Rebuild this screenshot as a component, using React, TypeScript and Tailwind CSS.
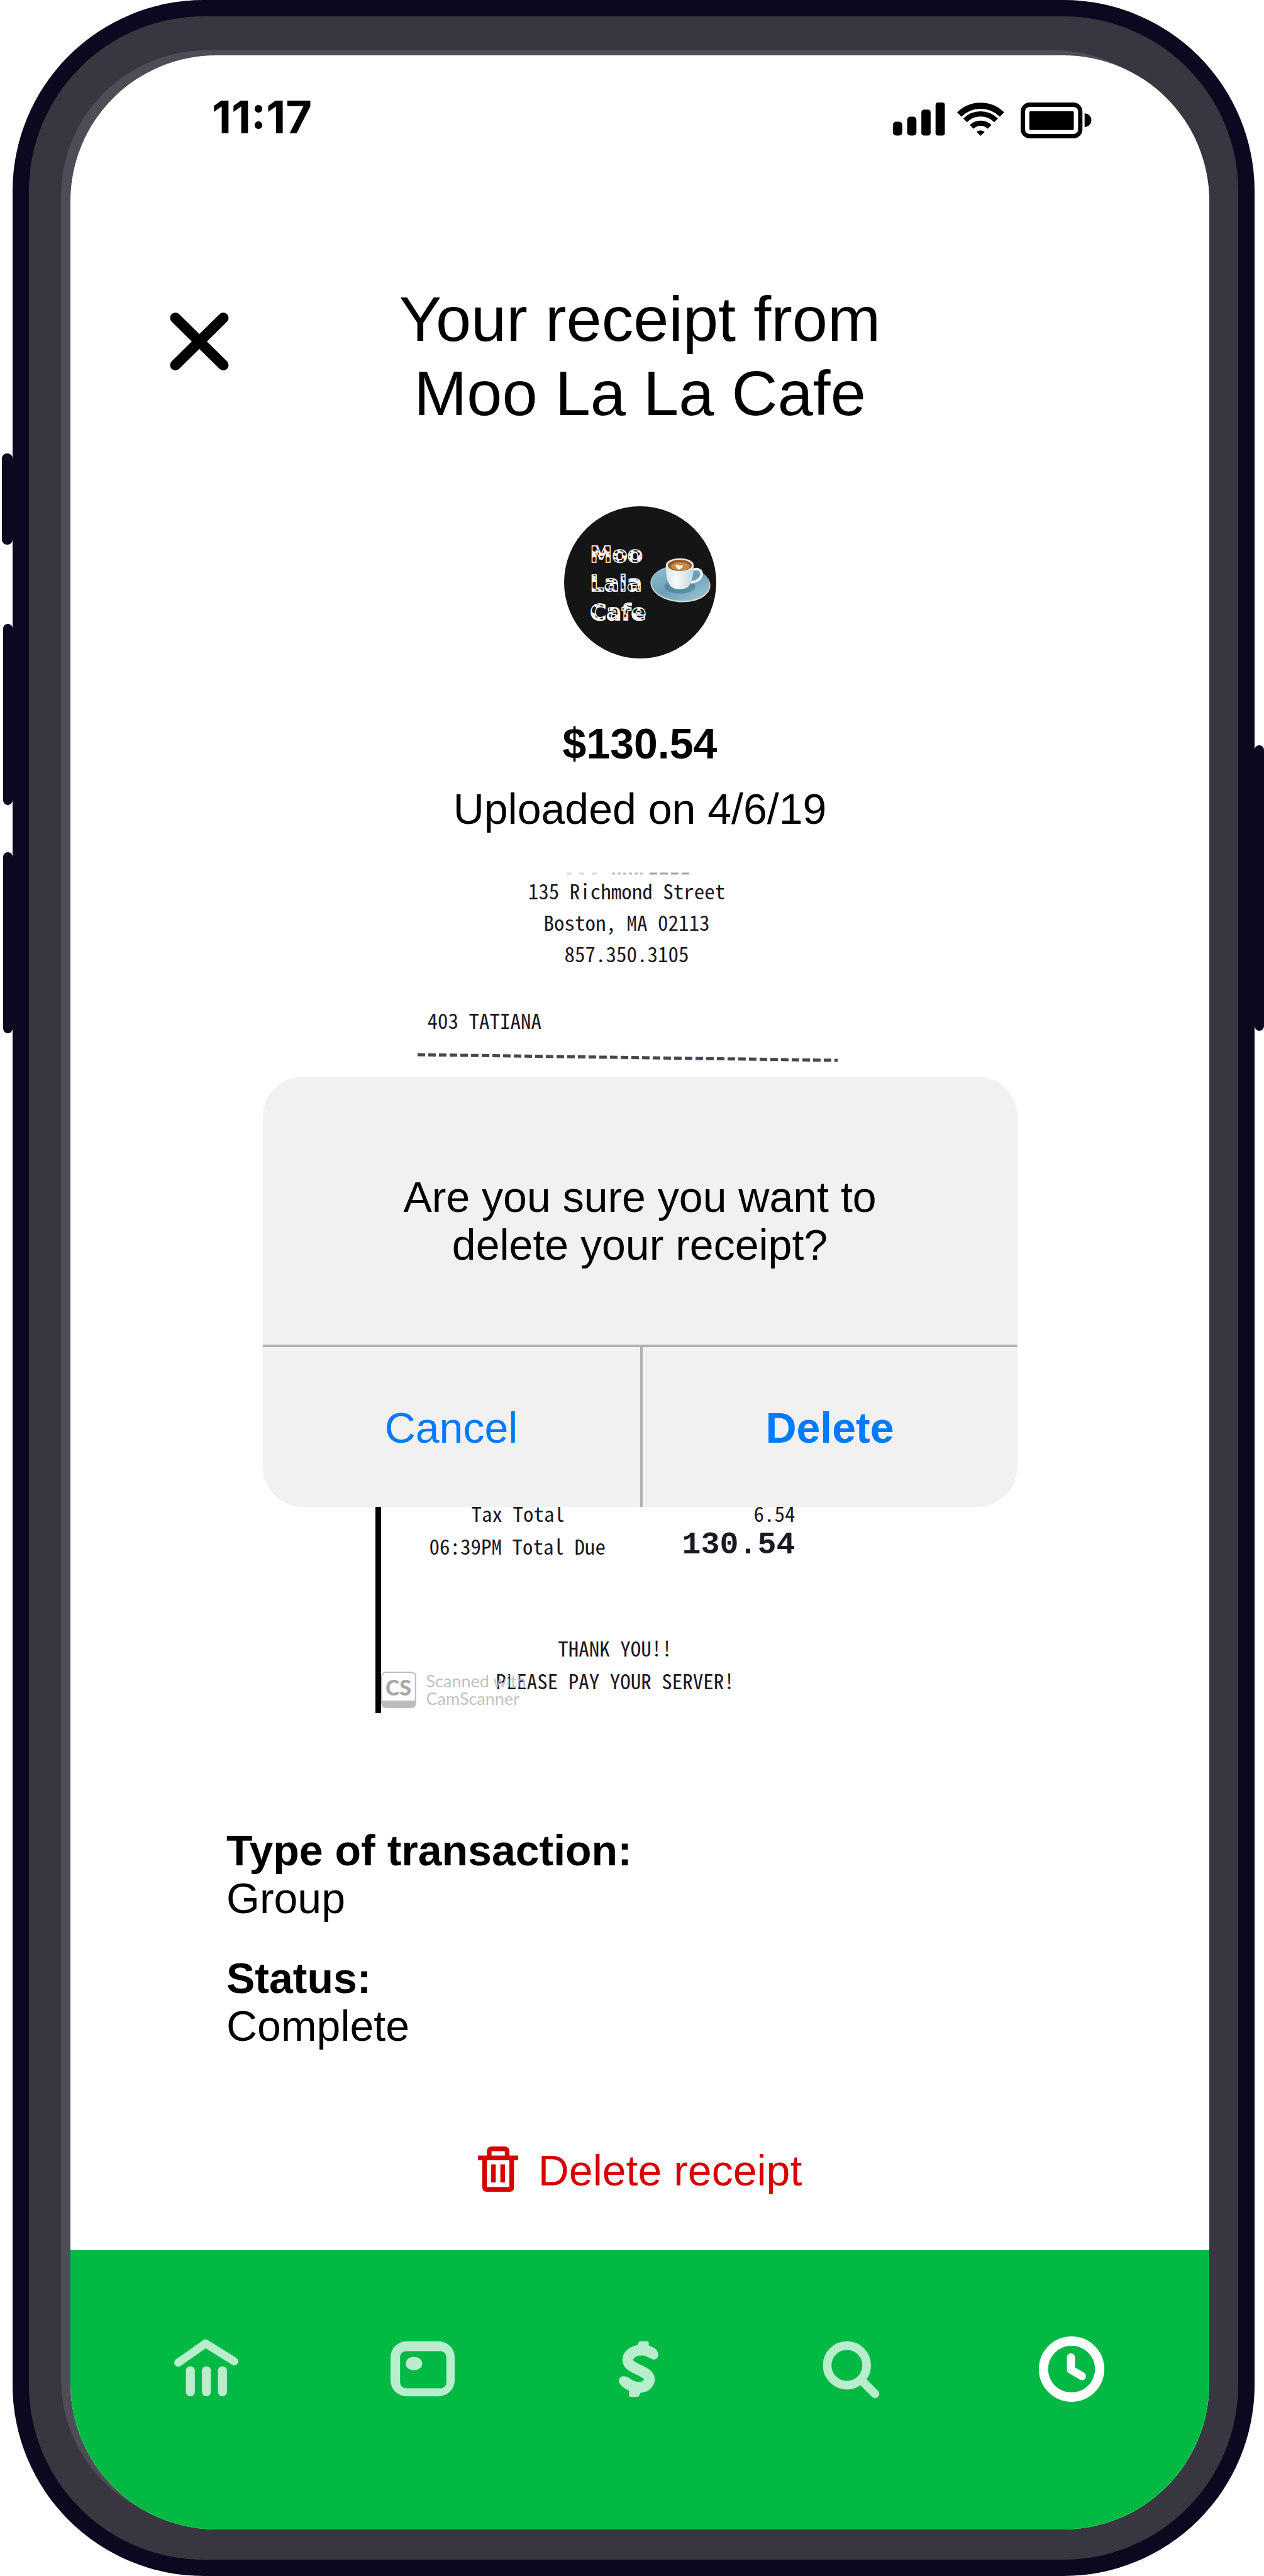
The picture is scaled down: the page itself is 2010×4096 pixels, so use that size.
import React, { useState } from 'react'

type IconProps = { className?: string }

const StatusIcons: React.FC = () => (
    <svg viewBox="0 0 322 58" className="mb-2 h-[57px] w-[316px]" aria-hidden="true">
        <rect x="0" y="31" width="15" height="22.5" rx="5" />
        <rect x="23" y="23" width="15" height="30.5" rx="5" />
        <rect x="46" y="11.5" width="15" height="42" rx="4.5" />
        <rect x="69" y="0" width="15" height="53.5" rx="4" />
        <g fill="none" stroke="#000">
            <path d="M107.4 19.4 A49 49 0 0 1 176.6 19.4" strokeWidth="10" />
            <path d="M116.9 28.9 A35.5 35.5 0 0 1 167.1 28.9" strokeWidth="8.5" />
            <path d="M127.5 39.5 A20.5 20.5 0 0 1 156.5 39.5" strokeWidth="8.5" />
        </g>
        <path d="M142 54 L135.5 47.5 A9.5 9.5 0 0 1 148.5 47.5 Z" />
        <rect x="210.5" y="3.5" width="93" height="51" rx="11" fill="none" stroke="#000" strokeWidth="7" />
        <rect x="221" y="14" width="72" height="30.5" rx="2" />
        <path d="M310.5 17.5 A11 11 0 0 1 310.5 39.5 Z" />
    </svg>
)

const CloseIcon: React.FC<IconProps> = ({ className }) => (
    <svg viewBox="0 0 95 94" className={className} aria-hidden="true">
        <path d="M9 9 L86 85 M86 9 L9 85" stroke="#000" strokeWidth="17" strokeLinecap="round" />
    </svg>
)

const CafeLogo: React.FC = () => (
    <svg viewBox="0 0 246 246" className="mx-auto size-[242px]" role="img" aria-label="Moo Lala Cafe">
        <defs>
            <pattern id="cow" width="22" height="20" patternUnits="userSpaceOnUse">
                <rect width="26" height="24" fill="#fff" />
                <path d="M2 3 C6 0 10 4 8 8 C12 10 9 15 5 13 C1 13 -1 6 2 3 Z" fill="#151515" />
                <path d="M13 7 C16 4 21 6 20 11 C22 16 17 18 15 14 C11 14 10 10 13 7 Z" fill="#151515" />
                <path d="M7 15 C11 13 14 16 12 19 C9 21 5 19 7 15 Z" fill="#151515" />
                <path d="M13 0 H19 C19 4 16 4 13 0 Z" fill="#151515" />
            </pattern>
            <linearGradient id="saucer" x1="0" y1="0" x2="1" y2="1">
                <stop offset="0" stopColor="#9cc4d3" />
                <stop offset="0.5" stopColor="#6c9fb5" />
                <stop offset="1" stopColor="#a4cbd9" />
            </linearGradient>
            <linearGradient id="cup" x1="0" y1="0" x2="1" y2="0">
                <stop offset="0" stopColor="#d5e5e9" />
                <stop offset="0.35" stopColor="#f7fafa" />
                <stop offset="1" stopColor="#c3d9df" />
            </linearGradient>
        </defs>
        <circle cx="123" cy="123" r="123" fill="#151515" />
        <g
            fill="url(#cow)"
            stroke="#fff"
            strokeWidth="1.4"
            fontFamily="'DejaVu Sans', sans-serif"
            fontWeight="700"
            fontSize="36"
        >
            <text x="42" y="90">Moo</text>
            <text x="42" y="137">Lala</text>
            <text x="42" y="184">Cafe</text>
        </g>
        <ellipse cx="188" cy="126" rx="48.5" ry="29" fill="#e0ddd4" transform="rotate(4 188 126)" />
        <ellipse cx="188" cy="124.5" rx="47.5" ry="28.5" fill="url(#saucer)" transform="rotate(4 188 124)" />
        <ellipse cx="187" cy="130" rx="25" ry="11" fill="#4d8098" opacity="0.7" />
        <path d="M206 104 C216 98 224 104 222 112 C220 119 212 122 205 123" fill="none" stroke="#eef4f5" strokeWidth="4" />
        <path d="M164.5 95 C164 115 168 128 176 132 C183 135 191 135 198 132 C206 127 209 114 209.5 95 Z" fill="url(#cup)" />
        <ellipse cx="187" cy="95" rx="22.5" ry="11" fill="#f3efe6" />
        <ellipse cx="187" cy="95.5" rx="19.5" ry="9" fill="#9a5b22" />
        <ellipse cx="188" cy="97" rx="15" ry="6.5" fill="#c98a44" />
        <path d="M180 95 C183 93 185 95 187 96 C190 94 194 96 191 99 L185 103 C183 100 180 98 180 95 Z" fill="#fbf1df" />
    </svg>
)

const TrashIcon: React.FC = () => (
    <svg viewBox="0 0 65 73" className="h-[72px] w-16" fill="none" stroke="#d60000" strokeWidth="7.5" aria-hidden="true">
        <path d="M18.2 17 V8.5 Q18.2 3.8 23 3.8 H42.5 Q47.2 3.8 47.2 8.5 V17" />
        <path d="M0 18.5 H65" />
        <path d="M10.8 19 V66 Q10.8 69.2 14 69.2 H51.5 Q54.5 69.2 54.5 66 V19" />
        <path d="M25 29 V58 M40 29 V58" />
    </svg>
)

const BankIcon: React.FC<IconProps> = ({ className }) => (
    <svg viewBox="0 0 106 106" className={className} fill="currentColor" aria-hidden="true">
        <path d="M7.5 42.5 L52 11.5 L98.5 40.5" fill="none" stroke="currentColor" strokeWidth="13" strokeLinecap="round" strokeLinejoin="round" />
        <rect x="20" y="48.5" width="14.5" height="48.5" rx="7" />
        <rect x="46" y="48.5" width="14.5" height="48.5" rx="7" />
        <rect x="72" y="48.5" width="14.5" height="48.5" rx="7" />
    </svg>
)

const CardIcon: React.FC<IconProps> = ({ className }) => (
    <svg viewBox="0 0 106 106" className={className} fill="currentColor" aria-hidden="true">
        <path
            fillRule="evenodd"
            d="M27 8 H79 A26 26 0 0 1 105 34 V71 A26 26 0 0 1 79 97 H27 A26 26 0 0 1 1 71 V34 A26 26 0 0 1 27 8 Z M26 24 A9.5 9.5 0 0 0 16.5 33.5 V74.5 A9.5 9.5 0 0 0 26 84 H82 A9.5 9.5 0 0 0 91.5 74.5 V33.5 A9.5 9.5 0 0 0 82 24 Z"
        />
        <ellipse cx="39" cy="44" rx="13.3" ry="11" />
    </svg>
)

const CashIcon: React.FC<IconProps> = ({ className }) => (
    <svg viewBox="0 0 106 106" className={className} fill="currentColor" aria-hidden="true">
        <path
            d="M77 29.5 C70 23 62 21.5 54 22.5 C42 24 34.5 31 35 39 C36 53 69 55 70 69 C70 79 60 83.5 51 82.5 C42 81.5 35 78 28.5 72"
            fill="none"
            stroke="currentColor"
            strokeWidth="17.5"
            strokeLinejoin="round"
        />
        <path d="M77 29.5 L77 30 M28.5 72 L28 72" fill="none" stroke="currentColor" strokeWidth="15" strokeLinecap="round" />
        <path d="M55 8 H67 Q69 8 69 11 V19 L46 20 Q51 18 52 11 Q53 8 55 8 Z" />
        <path d="M37 84 H62 Q56 88 54 95 Q53 98 51 98 H39 Q37 98 37 95 Z" />
    </svg>
)

const SearchIcon: React.FC<IconProps> = ({ className }) => (
    <svg viewBox="0 0 106 106" className={className} fill="none" stroke="currentColor" strokeWidth="14" aria-hidden="true">
        <circle cx="39.5" cy="47" r="32" />
        <path d="M63 71 L85 93" strokeLinecap="round" />
    </svg>
)

const ClockIcon: React.FC<IconProps> = ({ className }) => (
    <svg viewBox="0 0 106 106" className={className} fill="none" stroke="currentColor" aria-hidden="true">
        <circle cx="53" cy="53" r="45.5" strokeWidth="15" />
        <path d="M52 34 V54 L70 64.5" strokeWidth="13" strokeLinecap="round" strokeLinejoin="round" />
    </svg>
)

const tabs = [
    { label: 'Banking', Icon: BankIcon },
    { label: 'Card', Icon: CardIcon },
    { label: 'Cash', Icon: CashIcon },
    { label: 'Search', Icon: SearchIcon },
    { label: 'Activity', Icon: ClockIcon },
]

const ConfirmDialog: React.FC<{ onClose: () => void }> = ({ onClose }) => (
    <div
        role="alertdialog"
        aria-labelledby="confirm-text"
        className="absolute top-[325px] left-1/2 w-[1200px] -translate-x-1/2 overflow-hidden rounded-[64px] bg-[#f1f1f1] text-[68px] leading-[76px]"
    >
        <p id="confirm-text" className="pt-[153px] pb-[121px] text-center">
            Are you sure you want to
            <br />
            delete your receipt?
        </p>
        <div className="grid grid-cols-[604px_1fr] border-t-4 border-[#b1b1b1] text-[#007aff]">
            <button type="button" onClick={onClose} className="border-r-4 border-[#b1b1b1] pt-[90px] pb-[88px]">
                Cancel
            </button>
            <button type="button" onClick={onClose} className="pt-[90px] pb-[88px] font-bold">
                Delete
            </button>
        </div>
    </div>
)

const Receipt: React.FC = () => (
    <div className="font-['Noto_Sans_Mono_CJK_SC','Liberation_Mono',monospace] text-[33px] text-[#1c1922]">
        <svg viewBox="0 0 842 4" className="h-1 w-full" aria-hidden="true">
            <path d="M304 2 H360" stroke="#d8d8d8" strokeWidth="3" strokeDasharray="8 12" />
            <path d="M376 2 H426" stroke="#bdbdbd" strokeWidth="3" strokeDasharray="5 4" />
            <path d="M436 2 H500" stroke="#a3a3a3" strokeWidth="3" strokeDasharray="12 5" />
        </svg>
        <div className="pr-[42px] text-center leading-[50px]">
            <p>135 Richmond Street</p>
            <p>Boston, MA 02113</p>
            <p>857.350.3105</p>
        </div>
        <p className="mt-14 pl-[83px] leading-[50px]">403 TATIANA</p>
        <svg viewBox="0 0 842 16" className="mt-[26px] h-4 w-full" aria-hidden="true">
            <path d="M67 4 L735 13" stroke="#4a4550" strokeWidth="5" strokeDasharray="12 5" />
        </svg>
        <div className="relative mt-[691px] border-l-[9px] border-black pb-[26px] leading-[52px]">
            <div className="flex items-start justify-between pr-[174px] pl-36">
                <span>Tax Total</span>
                <span>6.54</span>
            </div>
            <div className="flex items-start justify-between pr-[174px] pl-[77px]">
                <span>06:39PM Total Due</span>
                <span className="font-['Liberation_Mono',monospace] text-[50px] leading-[50px] font-bold">130.54</span>
            </div>
            <div className="pt-[110px] pr-[88px] text-center">
                <p>THANK YOU!!</p>
                <p>PLEASE PAY YOUR SERVER!</p>
            </div>
            <div className="absolute bottom-2 left-0 flex items-center gap-4 font-['Lato',sans-serif] text-[#c2c2c2]">
                <div className="h-[58px] w-14 rounded-lg border-2 border-b-[12px] border-[#bdbdbd] text-center text-[34px] leading-[46px] font-black text-[#a8a8a8]">
                    CS
                </div>
                <p className="text-[27px] leading-7">
                    Scanned with
                    <br />
                    CamScanner
                </p>
            </div>
        </div>
    </div>
)

const App: React.FC = () => {
    const [confirming, setConfirming] = useState(true)

    return (
        <div className="flex min-h-screen bg-white font-['Liberation_Sans',Arial,sans-serif] text-black">
            <div className="flex w-5 shrink-0 flex-col items-end pt-[721px]">
                <div className="h-[145px] w-[17px] rounded-lg bg-[#0b081f]"></div>
                <div className="mt-[126px] h-[288px] w-[15px] rounded-lg bg-[#0b081f]"></div>
                <div className="mt-[75px] h-[288px] w-[15px] rounded-lg bg-[#0b081f]"></div>
            </div>

            <div className="flex min-w-0 flex-1 rounded-[304px] bg-[#0b081f] p-[26px]">
                <div className="flex min-w-0 flex-1 rounded-[278px] bg-[#38373f] pt-[62px] pr-[46px] pb-[48px] pl-[66px]">
                    <div className="flex min-w-0 flex-1 flex-col overflow-hidden rounded-[232px] bg-white shadow-[-15px_-8px_0_0_#4e4d56]">
                        <div className="flex items-end justify-between pt-14 pr-[187px] pl-[225px]">
                            <span className="font-['Inter',sans-serif] text-[72px] leading-[84px] font-bold">11:17</span>
                            <StatusIcons />
                        </div>

                        <header className="mt-[220px] grid grid-cols-[1fr_auto_1fr] items-start px-[158px]">
                            <button type="button" aria-label="Close" className="justify-self-start pt-12">
                                <CloseIcon className="size-[94px]" />
                            </button>
                            <h1 className="text-center text-[101px] leading-[118px]">
                                Your receipt from
                                <br />
                                Moo La La Cafe
                            </h1>
                        </header>

                        <main>
                            <div className="mt-[121px] text-center text-[68px] leading-[76px]">
                                <CafeLogo />
                                <p className="mt-[97px] font-bold">$130.54</p>
                                <p className="mt-7">Uploaded on 4/6/19</p>
                            </div>

                            <div className="relative mx-auto mt-[63px] w-[842px]">
                                <Receipt />
                                {confirming && <ConfirmDialog onClose={() => setConfirming(false)} />}
                            </div>

                            <dl className="mt-[180px] pl-[248px] text-[68px] leading-[76px]">
                                <dt className="font-bold">Type of transaction:</dt>
                                <dd>Group</dd>
                                <dt className="mt-[51px] font-bold">Status:</dt>
                                <dd>Complete</dd>
                            </dl>

                            <button
                                type="button"
                                onClick={() => setConfirming(true)}
                                className="mx-auto mt-[154px] mb-[88px] flex items-start gap-8 text-[68px] leading-[76px] text-[#d60000]"
                            >
                                <TrashIcon />
                                Delete receipt
                            </button>
                        </main>

                        <nav className="mt-auto flex justify-between bg-[#02b944] pt-[137px] pr-[167px] pb-[203px] pl-[164px]">
                            {tabs.map(({ label, Icon }) => (
                                <a
                                    key={label}
                                    href="#"
                                    aria-label={label}
                                    className={label === 'Activity' ? 'text-white' : 'text-[#b8edcd]'}
                                >
                                    <Icon className="size-[104px]" />
                                </a>
                            ))}
                        </nav>
                    </div>
                </div>
            </div>

            <div className="w-[15px] shrink-0 pt-[1185px]">
                <div className="h-[454px] w-full rounded-lg bg-[#0b081f]"></div>
            </div>
        </div>
    )
}

export default App
